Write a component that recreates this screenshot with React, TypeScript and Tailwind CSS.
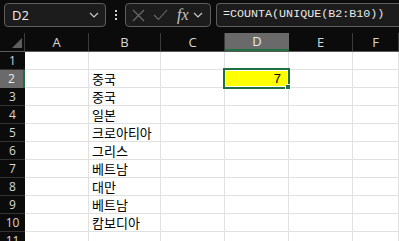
import React from 'react';

const cols = ['A', 'B', 'C', 'D', 'E', 'F'];
const rows: { n: number; b?: string }[] = [
  { n: 1 },
  { n: 2, b: '중국' },
  { n: 3, b: '중국' },
  { n: 4, b: '일본' },
  { n: 5, b: '크로아티아' },
  { n: 6, b: '그리스' },
  { n: 7, b: '베트남' },
  { n: 8, b: '대만' },
  { n: 9, b: '베트남' },
  { n: 10, b: '캄보디아' },
  { n: 11 },
];

const gridCols = 'grid grid-cols-[25px_64px_72px_64px_64px_64px_1fr]';

function Chevron({ className }: { className?: string }) {
  return (
    <svg className={className} width="10" height="6" viewBox="0 0 10 6" fill="none">
      <path d="M1 1l4 4 4-4" stroke="currentColor" strokeWidth="1.2" />
    </svg>
  );
}

export default function App() {
  return (
    <div className="w-[399px] h-[241px] overflow-hidden bg-[#0b0b0b] font-['Open_Sans','Noto_Sans',sans-serif]">
      {/* formula bar */}
      <div className="h-[33px] flex items-start pt-[3px] pl-[4px]">
        <div className="w-[102px] h-[24px] rounded-[4px] border border-[#5e5e5e] bg-[#1c1c1c] flex items-center justify-between pl-[7px] pr-[6px]">
          <span className="text-[13px] text-[#f0f0f0] leading-none">D2</span>
          <Chevron className="text-[#c8c8c8]" />
        </div>
        <div className="ml-[9px] mr-[8px] h-[24px] flex flex-col items-center justify-center gap-[2px]">
          <span className="w-[2px] h-[2px] bg-[#cfcfcf]" />
          <span className="w-[2px] h-[2px] bg-[#cfcfcf]" />
          <span className="w-[2px] h-[2px] bg-[#cfcfcf]" />
        </div>
        <div className="w-[86px] h-[24px] rounded-[4px] border border-[#5e5e5e] bg-[#1c1c1c] flex items-center pl-[6px]">
          <svg width="13" height="13" viewBox="0 0 13 13" fill="none" className="text-[#6c6c6c]">
            <path d="M1 1l11 11M12 1L1 12" stroke="currentColor" strokeWidth="1.1" />
          </svg>
          <svg width="15" height="12" viewBox="0 0 15 12" fill="none" className="ml-[8px] text-[#6c6c6c]">
            <path d="M1 6l4.5 4.5L14 1" stroke="currentColor" strokeWidth="1.1" />
          </svg>
          <span className="ml-[9px] text-[#c4c4c4] text-[16px] italic leading-none font-['Liberation_Serif',serif]">fx</span>
          <Chevron className="ml-[4px] text-[#c8c8c8]" />
        </div>
        <div className="ml-[5px] flex-1 h-[24px] rounded-l-[4px] border border-r-0 border-[#5e5e5e] bg-[#1c1c1c] flex items-center pl-[6px]">
          <span className="text-[11.7px] text-[#e8e8e8] font-['Liberation_Mono',monospace] leading-none whitespace-nowrap">
            =COUNTA(UNIQUE(B2:B10))
          </span>
        </div>
      </div>

      {/* column headers */}
      <div className={`${gridCols} h-[19px] border-b border-[#5a5a5a]`}>
        <div className="relative border-r border-[#3a3a3a]">
          <svg className="absolute left-[12px] top-[5px]" width="10" height="10" viewBox="0 0 10 10">
            <path d="M10 0L10 10L0 10Z" fill="#5e5e5e" />
          </svg>
        </div>
        {cols.map((c) => (
          <div
            key={c}
            className={
              c === 'D'
                ? 'flex items-center justify-center bg-[#6a6a6a] border-b-2 border-[#1f6f43] text-[13px] text-[#e8e8e8] leading-none'
                : 'flex items-center justify-center border-r border-[#3a3a3a] text-[13px] text-[#d8d8d8] leading-none'
            }
          >
            {c}
          </div>
        ))}
      </div>

      {/* rows */}
      {rows.map((r) => (
        <div key={r.n} className={`${gridCols} h-[18px]`}>
          <div
            className={
              r.n === 2
                ? 'flex items-center justify-center bg-[#6a6a6a] border-r-2 border-[#1f6f43] text-[12px] text-[#ececec] leading-none'
                : 'flex items-center justify-center border-b border-[#333333] text-[12px] text-[#d8d8d8] leading-none'
            }
          >
            {r.n}
          </div>
          {cols.map((c) => {
            const sel = r.n === 2 && c === 'D';
            return (
              <div
                key={c}
                className={
                  sel
                    ? 'relative bg-[#ffff00] border-r border-b border-[#e1e1e1] flex items-center justify-end pr-[7px]'
                    : 'bg-white border-r border-b border-[#e1e1e1] flex items-center pl-[3px] overflow-visible whitespace-nowrap'
                }
              >
                {c === 'B' && r.b && (
                  <span className="text-[13px] text-black leading-none font-['Noto_Sans_CJK_KR',sans-serif]">{r.b}</span>
                )}
                {sel && (
                  <>
                    <span className="text-[13px] text-black leading-none font-['Liberation_Sans',sans-serif]">7</span>
                    <div className="absolute -left-[2px] -top-[2px] -right-[2px] -bottom-[2px] border-2 border-[#1f6f43] shadow-[inset_0_0_0_1px_#ffffff]">
                      <div className="absolute -right-[3px] -bottom-[3px] w-[6px] h-[6px] bg-[#1f6f43] border border-white" />
                    </div>
                  </>
                )}
              </div>
            );
          })}
        </div>
      ))}
    </div>
  );
}
